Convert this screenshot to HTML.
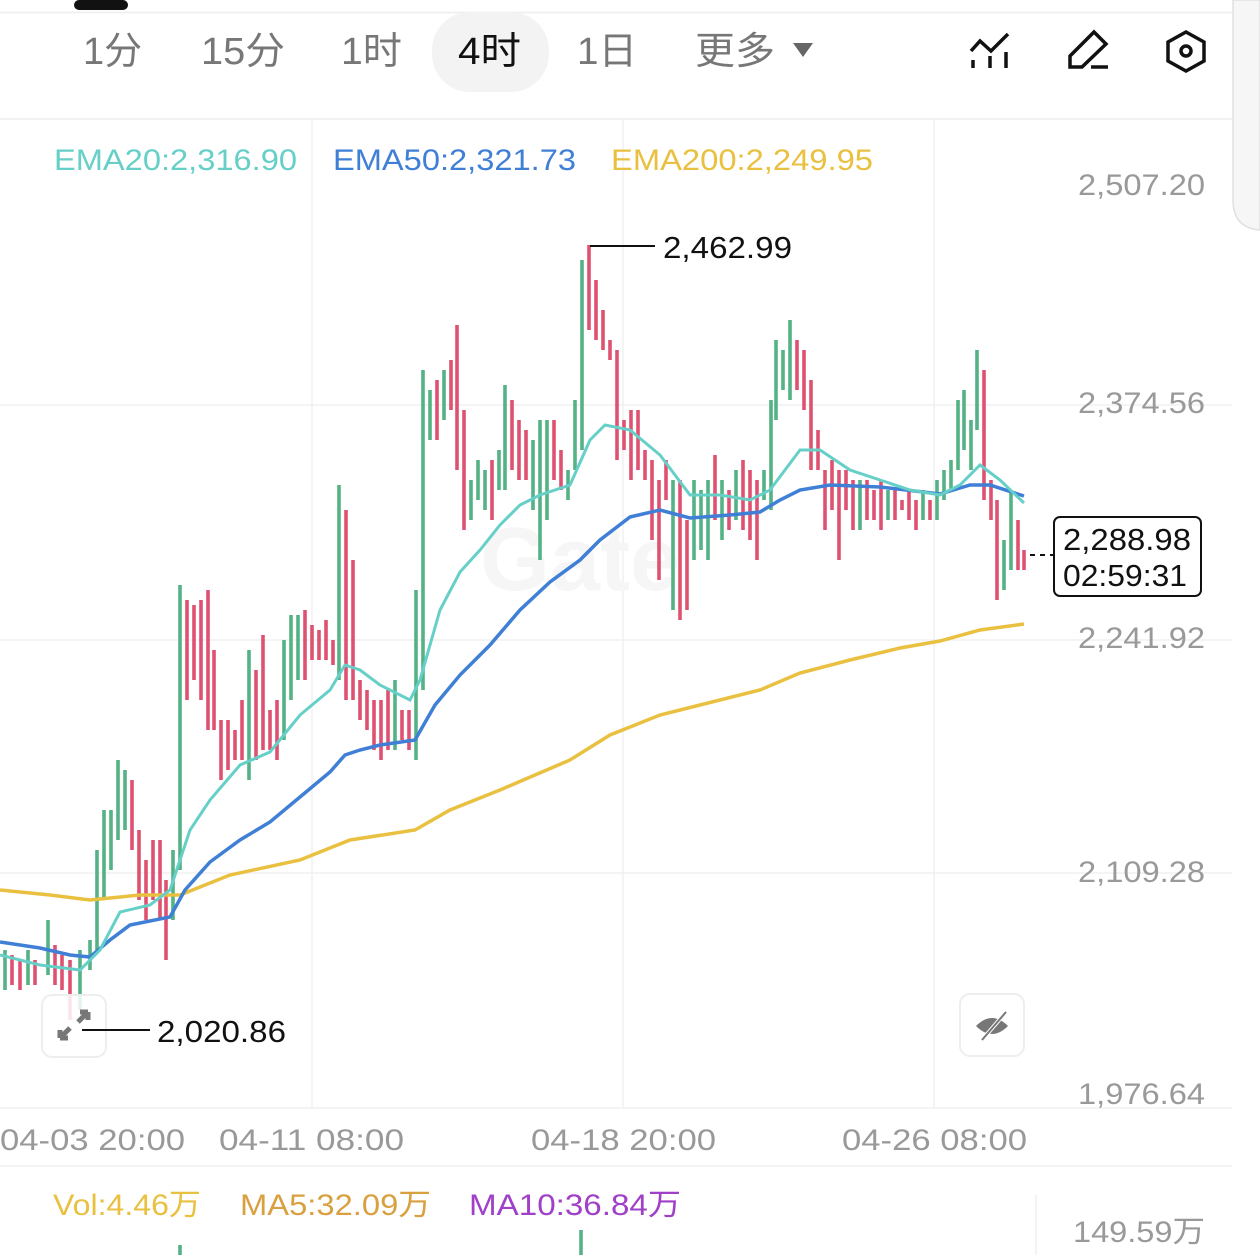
<!DOCTYPE html>
<html><head><meta charset="utf-8">
<style>
html,body{margin:0;padding:0;background:#fff;width:1260px;height:1255px;overflow:hidden}
svg{display:block}
text{font-family:"Liberation Sans","Noto Sans CJK SC",sans-serif}
</style></head><body>
<svg width="1260" height="1255" viewBox="0 0 1260 1255" xmlns="http://www.w3.org/2000/svg">
<rect width="1260" height="1255" fill="#fff"/>
<rect x="74" y="0" width="54" height="10" rx="5" fill="#111"/>
<line x1="0" y1="12.5" x2="1232" y2="12.5" stroke="#eee" stroke-width="1.5"/>
<path d="M1233 0 H1260 V230 H1260 Q1233 228 1233 200 Z" fill="#f6f6f6" stroke="#e0e0e0" stroke-width="1.5"/>
<rect x="432" y="12" width="117" height="80" rx="38" fill="#f3f3f3"/>
<g font-size="38" fill="#777">
<text x="83" y="64">1分</text>
<text x="201" y="64" textLength="84" lengthAdjust="spacingAndGlyphs">15分</text>
<text x="341" y="64" textLength="61" lengthAdjust="spacingAndGlyphs">1时</text>
<text x="458" y="64" fill="#111" textLength="63" lengthAdjust="spacingAndGlyphs">4时</text>
<text x="577" y="64" textLength="60" lengthAdjust="spacingAndGlyphs">1日</text>
<text x="695" y="64" textLength="80" lengthAdjust="spacingAndGlyphs">更多</text>
</g>
<path d="M793 43 L813 43 L803 57 Z" fill="#666"/>
<g fill="none" stroke="#111" stroke-width="3.5">
<path d="M971 51 L980 41 L991 51 L1008 34"/>
<path d="M973 60 V68 M990 56 V68 M1006 52 V68"/>
<path d="M1070 67 V56 L1094 32 L1106 44 L1082 67 Z"/>
<path d="M1091 67 H1108"/>
<path d="M1186 32 L1204 42 V61 L1186 71 L1168 61 V42 Z"/>
<circle cx="1186" cy="51" r="5"/>
</g>
<line x1="0" y1="119" x2="1232" y2="119" stroke="#eee" stroke-width="1.5"/>
<g stroke="#f0f0f0" stroke-width="1.5">
<line x1="312" y1="120" x2="312" y2="1108"/>
<line x1="623" y1="120" x2="623" y2="1108"/>
<line x1="934" y1="120" x2="934" y2="1108"/>
<line x1="0" y1="405" x2="1232" y2="405"/>
<line x1="0" y1="640" x2="1232" y2="640"/>
<line x1="0" y1="873" x2="1232" y2="873"/>
<line x1="0" y1="1108" x2="1232" y2="1108"/>
<line x1="0" y1="1166" x2="1232" y2="1166"/>
</g>
<text x="480" y="590" font-size="90" font-weight="bold" fill="#f6f6f6">Gate</text>
<text x="54" y="170" font-size="30" fill="#66d0c8" textLength="243" lengthAdjust="spacingAndGlyphs">EMA20:2,316.90</text>
<text x="333" y="170" font-size="30" fill="#3f7fd6" textLength="243" lengthAdjust="spacingAndGlyphs">EMA50:2,321.73</text>
<text x="611" y="170" font-size="30" fill="#e9c040" textLength="262" lengthAdjust="spacingAndGlyphs">EMA200:2,249.95</text>
<g font-size="30" fill="#999" text-anchor="end">
<text x="1205" y="195" textLength="127" lengthAdjust="spacingAndGlyphs">2,507.20</text>
<text x="1205" y="413" textLength="127" lengthAdjust="spacingAndGlyphs">2,374.56</text>
<text x="1205" y="648" textLength="127" lengthAdjust="spacingAndGlyphs">2,241.92</text>
<text x="1205" y="882" textLength="127" lengthAdjust="spacingAndGlyphs">2,109.28</text>
<text x="1205" y="1104" textLength="127" lengthAdjust="spacingAndGlyphs">1,976.64</text>
</g>
<path stroke="#55b285" stroke-width="3.6" fill="none" d="M5 950V990M28 950V985M48 920V975M80 950V1010M90 940V970M97 850V950M104 810V900M111 810V870M118 760V840M125 770V830M173 850V920M180 585V870M249 650V780M284 640V740M291 615V700M298 615V680M339 485V680M395 680V750M416 590V760M423 370V690M430 390V440M444 370V420M471 480V520M478 460V500M485 470V510M499 450V490M505 385V490M533 440V510M540 420V560M547 420V520M568 470V500M575 400V470M582 260V450M673 480V610M694 480V560M701 490V550M708 480V560M722 480V540M736 470V520M764 470V500M771 400V510M776 340V420M783 350V390M790 320V400M860 480V530M888 490V520M923 490V520M937 480V520M944 470V500M951 460V490M958 400V470M964 390V450M971 420V470M977 350V430M1004 540V590M1011 490V570"/>
<path stroke="#df5171" stroke-width="3.6" fill="none" d="M12 955V985M20 960V990M35 960V985M55 945V985M62 955V990M70 960V1020M132 780V850M139 830V900M146 860V920M153 840V900M160 840V920M166 880V960M187 600V700M194 605V680M201 600V700M208 590V730M214 650V730M221 720V780M228 720V770M235 730V760M242 700V760M256 670V760M263 635V750M270 710V750M277 700V760M305 610V680M312 625V660M319 630V660M326 620V660M333 640V665M346 510V700M353 560V700M360 680V720M367 690V730M374 700V750M381 700V760M388 690V750M402 710V740M409 710V750M437 380V440M451 360V410M457 325V470M464 410V530M492 460V520M512 400V470M519 420V480M526 430V480M554 420V480M561 450V490M589 245V330M596 280V340M603 310V350M610 340V360M617 350V460M624 420V450M631 410V480M638 410V470M645 450V480M652 460V540M659 480V580M666 460V500M680 480V620M687 520V610M715 455V520M729 490V530M743 460V530M750 470V540M757 480V560M797 340V390M804 350V410M811 380V470M818 430V470M825 470V530M832 460V510M839 470V560M846 470V510M853 480V530M867 480V520M874 490V520M881 480V530M895 490V520M902 500V510M909 490V520M916 500V530M930 500V520M984 370V500M991 480V520M997 500V600M1018 520V570M1024 550V570"/>
<path fill="none" stroke="#e9c040" stroke-width="3.5" d="M0 890 L50 895 L90 900 L140 895 L180 895 L230 875 L300 860 L350 840 L415 830 L450 810 L500 790 L570 760 L610 735 L660 715 L700 705 L760 690 L800 673 L850 660 L900 648 L940 641 L980 630 L1024 624"/>
<path fill="none" stroke="#3f7fd6" stroke-width="3.5" d="M0 942 L40 948 L70 955 L90 957 L110 940 L130 925 L170 917 L185 890 L210 862 L240 840 L270 822 L300 797 L330 772 L345 755 L360 750 L380 745 L415 740 L435 705 L460 675 L490 645 L520 610 L550 582 L580 560 L600 540 L630 517 L660 510 L690 518 L730 515 L760 512 L780 500 L800 490 L830 485 L880 487 L940 494 L970 485 L990 485 L1024 496"/>
<path fill="none" stroke="#66d0c8" stroke-width="3" d="M0 955 L40 965 L80 970 L100 950 L120 912 L150 905 L170 890 L190 830 L210 800 L240 765 L270 752 L300 715 L330 690 L345 665 L360 670 L380 685 L410 700 L420 680 L440 610 L460 572 L480 550 L500 525 L520 505 L540 495 L570 485 L590 440 L605 425 L630 430 L660 455 L690 495 L720 495 L750 500 L770 490 L800 450 L820 450 L850 470 L880 480 L910 490 L940 495 L960 485 L980 465 L1000 480 L1024 503"/>
<line x1="590" y1="246" x2="655" y2="246" stroke="#111" stroke-width="2"/>
<text x="663" y="258" font-size="31" fill="#111" textLength="129" lengthAdjust="spacingAndGlyphs">2,462.99</text>
<rect x="42" y="995" width="64" height="62" rx="10" fill="#fff" fill-opacity="0.85" stroke="#eee" stroke-width="2"/>
<path d="M60 1038 L70 1028 M60 1038 V1030 M60 1038 H68 M88 1012 L78 1022 M88 1012 V1020 M88 1012 H80" stroke="#777" stroke-width="5" fill="none"/>
<line x1="82" y1="1030" x2="150" y2="1030" stroke="#111" stroke-width="2"/>
<text x="157" y="1042" font-size="31" fill="#111" textLength="129" lengthAdjust="spacingAndGlyphs">2,020.86</text>
<rect x="960" y="994" width="64" height="62" rx="10" fill="#fff" stroke="#eee" stroke-width="2"/>
<path d="M976 1026 Q992 1010 1008 1026 Q992 1042 976 1026 Z" fill="#777"/>
<line x1="982" y1="1040" x2="1006" y2="1012" stroke="#fff" stroke-width="4"/>
<line x1="982" y1="1040" x2="1006" y2="1012" stroke="#777" stroke-width="2"/>
<line x1="1030" y1="555" x2="1054" y2="555" stroke="#111" stroke-width="2" stroke-dasharray="5 5"/>
<rect x="1054" y="517" width="147" height="79" rx="6" fill="#fff" stroke="#111" stroke-width="2"/>
<text x="1063" y="550" font-size="31" fill="#111" textLength="128" lengthAdjust="spacingAndGlyphs">2,288.98</text>
<text x="1063" y="586" font-size="31" fill="#111" textLength="124" lengthAdjust="spacingAndGlyphs">02:59:31</text>
<g font-size="30" fill="#999">
<text x="0" y="1150" textLength="185" lengthAdjust="spacingAndGlyphs">04-03 20:00</text>
<text x="219" y="1150" textLength="185" lengthAdjust="spacingAndGlyphs">04-11 08:00</text>
<text x="531" y="1150" textLength="185" lengthAdjust="spacingAndGlyphs">04-18 20:00</text>
<text x="842" y="1150" textLength="185" lengthAdjust="spacingAndGlyphs">04-26 08:00</text>
</g>
<text x="53" y="1215" font-size="30" fill="#e9c040" textLength="148" lengthAdjust="spacingAndGlyphs">Vol:4.46万</text>
<text x="240" y="1215" font-size="30" fill="#d9a040" textLength="191" lengthAdjust="spacingAndGlyphs">MA5:32.09万</text>
<text x="469" y="1215" font-size="30" fill="#a040c8" textLength="212" lengthAdjust="spacingAndGlyphs">MA10:36.84万</text>
<text x="1205" y="1242" font-size="30" fill="#999" text-anchor="end" textLength="132" lengthAdjust="spacingAndGlyphs">149.59万</text>
<line x1="1036" y1="1195" x2="1036" y2="1255" stroke="#f0f0f0" stroke-width="1.5"/>
<line x1="180" y1="1245" x2="180" y2="1255" stroke="#55b285" stroke-width="3.6"/>
<line x1="581" y1="1230" x2="581" y2="1255" stroke="#55b285" stroke-width="3.6"/>
</svg>
</body></html>
